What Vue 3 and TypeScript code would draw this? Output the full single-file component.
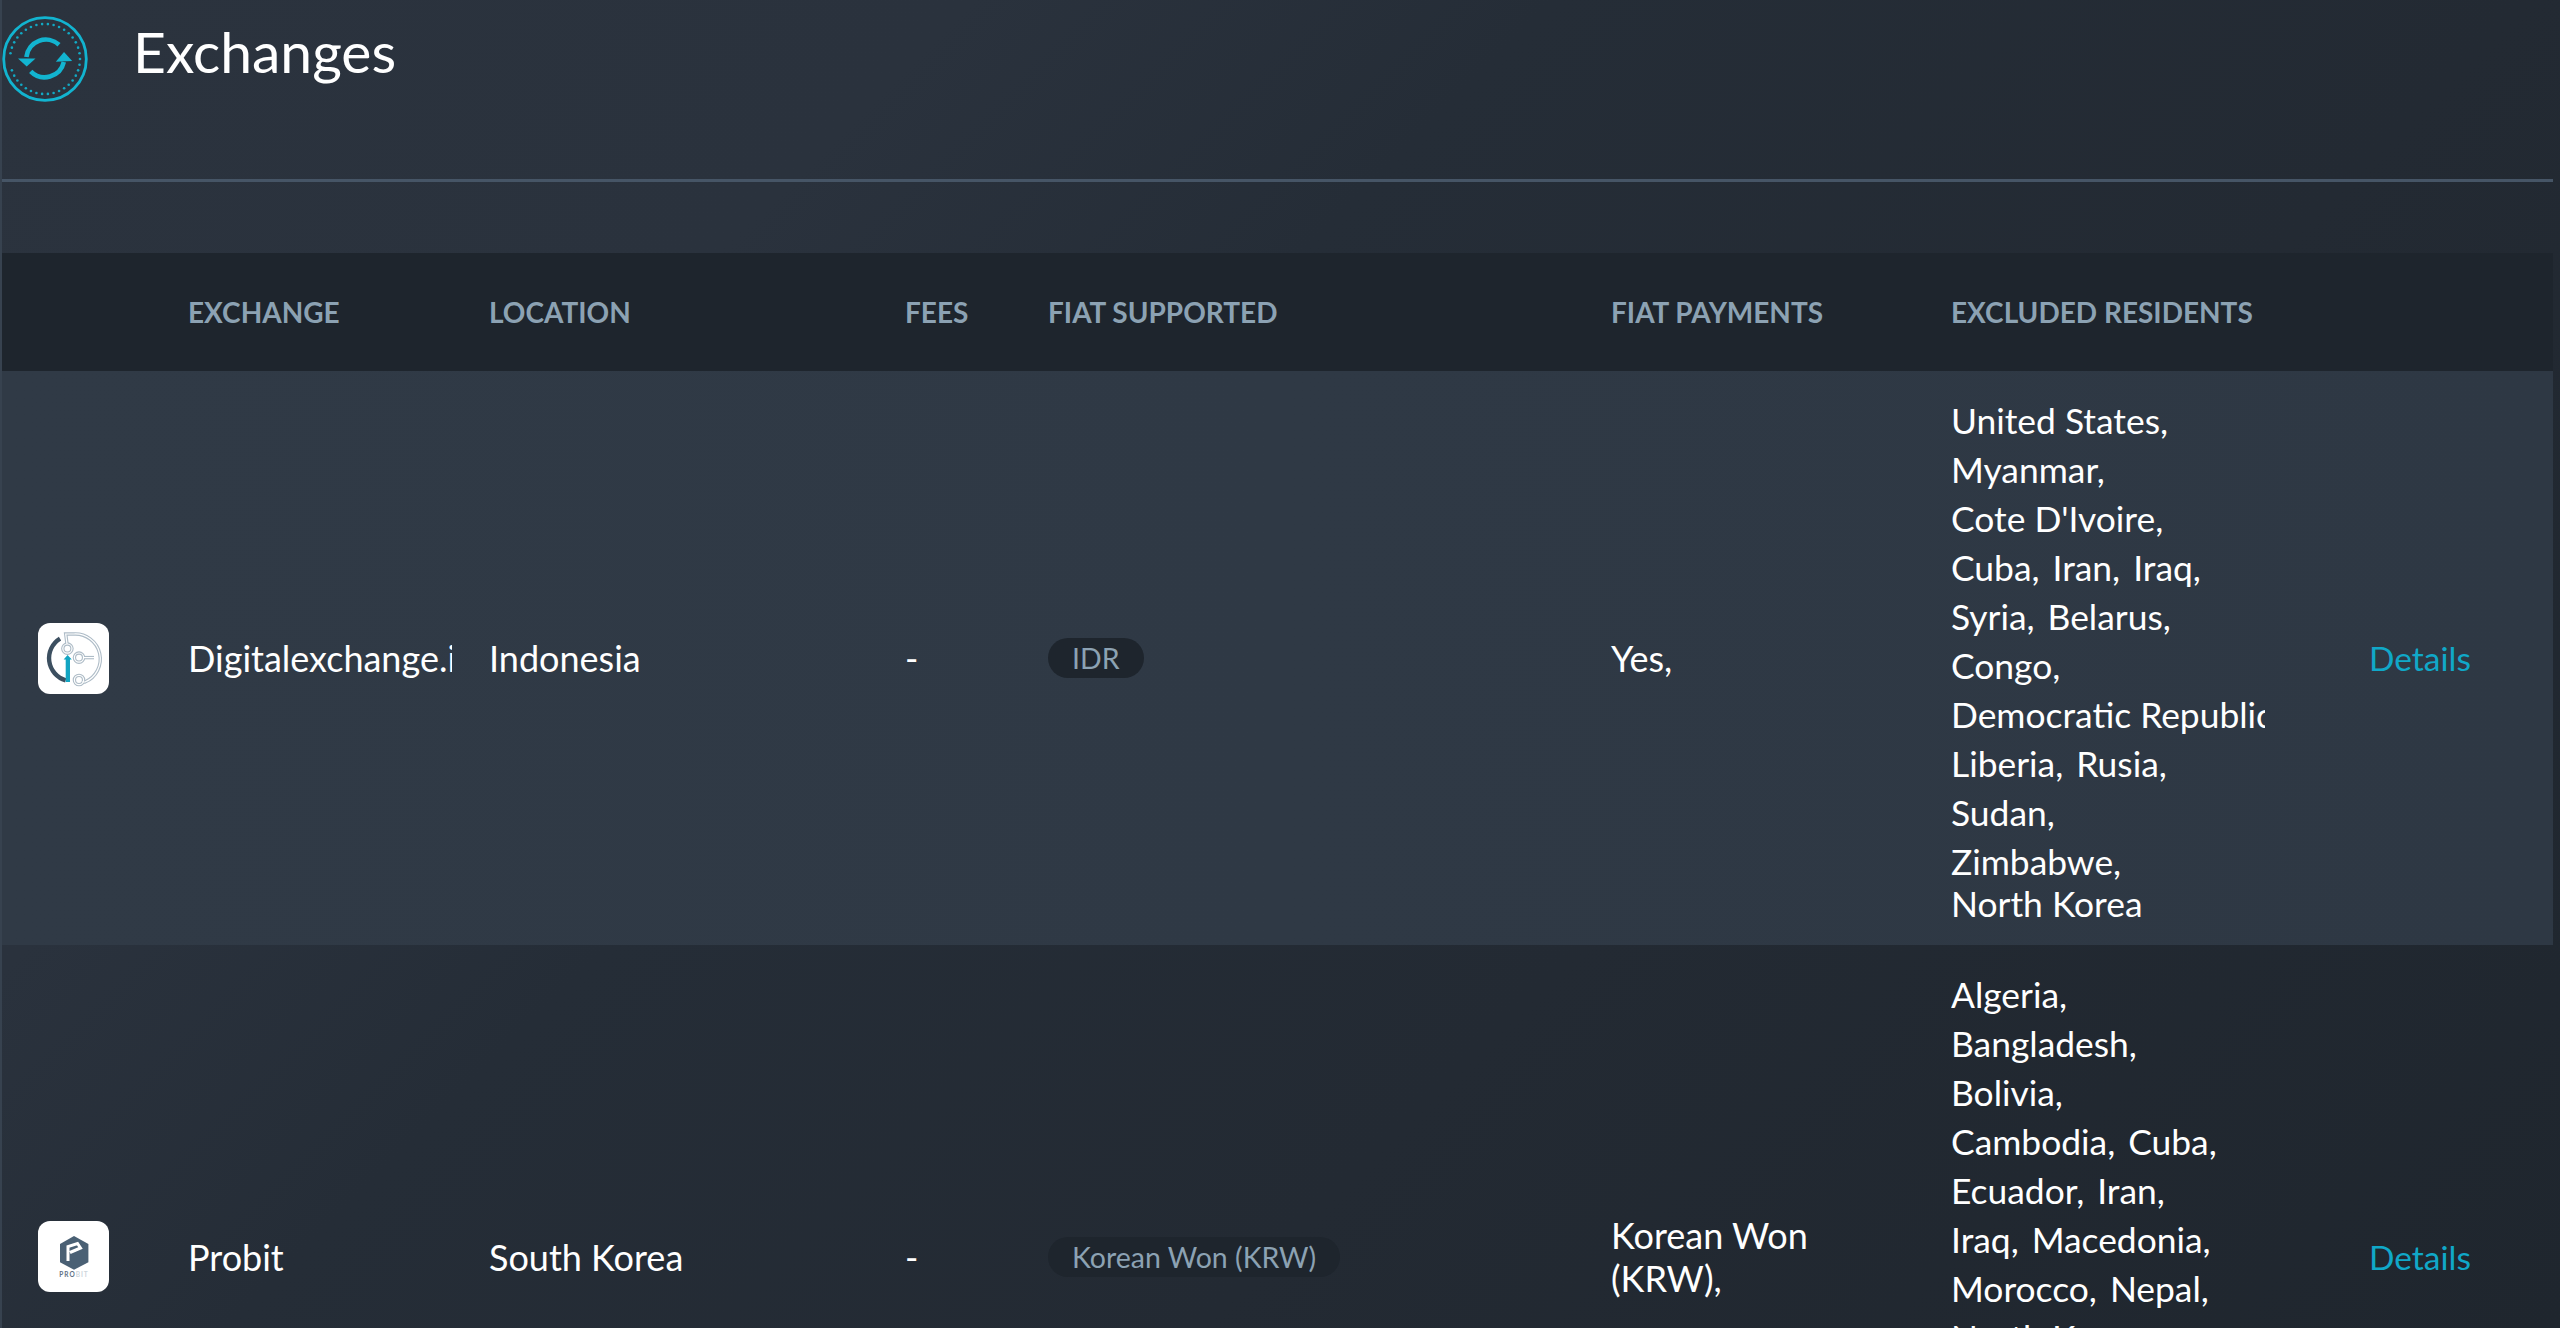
<script setup lang="ts">
interface Row {
  name: string
  location: string
  fiat: string
  payments: string[]
  excluded: string[][]
}
const rows: Row[] = [
  {
    name: 'Digitalexchange.io',
    location: 'Indonesia',
    fiat: 'IDR',
    payments: ['Yes,'],
    excluded: [
      ['United States,'], ['Myanmar,'], ["Cote D'Ivoire,"], ['Cuba,', 'Iran,', 'Iraq,'],
      ['Syria,', 'Belarus,'], ['Congo,'], ['Democratic Republic of Congo,'],
      ['Liberia,', 'Rusia,'], ['Sudan,'], ['Zimbabwe,'], ['North Korea']
    ]
  },
  {
    name: 'Probit',
    location: 'South Korea',
    fiat: 'Korean Won (KRW)',
    payments: ['Korean Won (KRW),'],
    excluded: [
      ['Algeria,'], ['Bangladesh,'], ['Bolivia,'], ['Cambodia,', 'Cuba,'], ['Ecuador,', 'Iran,'],
      ['Iraq,', 'Macedonia,'], ['Morocco,', 'Nepal,'], ['North Korea,'], ['Pakistan,'], ['Sudan,'], ['Syria,'], ['Yemen']
    ]
  }
]
const dots = Array.from({ length: 38 }, (_, i) => {
  const a = (i / 38) * Math.PI * 2
  return { x: 35 * Math.cos(a), y: 35 * Math.sin(a) }
}).filter((d) => !(d.x < -30 && d.y > 0 && d.y < 11))
</script>

<template>
  <div class="page">
    <main class="content">
      <header class="head">
        <svg class="logo" width="86" height="86" viewBox="-43 -43 86 86">
          <circle r="41.3" fill="none" stroke="#12b4d0" stroke-width="2.8" />
          <circle v-for="(d, i) in dots" :key="i" :cx="d.x" :cy="d.y" r="1.3" fill="#12a9c4" />
          <path d="M14 -14.3 A19.6 19.6 0 0 0 -18.6 -2" fill="none" stroke="#12b4d0" stroke-width="4.6" />
          <path d="M-14.3 12.3 A19.6 19.6 0 0 0 18.8 3" fill="none" stroke="#12b4d0" stroke-width="4.6" />
          <path d="M-27 -0.5 L-9.5 -0.5 L-18.3 7.5 Z" fill="#12b4d0" />
          <path d="M10.8 2.8 L27.2 2 L19 -7 Z" fill="#12b4d0" />
        </svg>
        <h1>Exchanges</h1>
      </header>
      <div class="rule"></div>
      <div class="row thead">
        <div></div>
        <div>EXCHANGE</div>
        <div>LOCATION</div>
        <div>FEES</div>
        <div>FIAT SUPPORTED</div>
        <div>FIAT PAYMENTS</div>
        <div>EXCLUDED RESIDENTS</div>
        <div></div>
      </div>
      <div v-for="(r, idx) in rows" :key="r.name" class="row body" :class="{ alt: idx === 0 }">
        <div class="iconcell">
          <div class="badge">
            <svg v-if="idx === 0" width="71" height="71" viewBox="0 0 71 71">
              <path d="M22 15.6 A23 23 0 0 0 27.7 57.3" fill="none" stroke="#3c4f60" stroke-width="4.4" />
              <g fill="none" stroke="#aebcc7" stroke-width="3.4">
                <path d="M29 21 L27.7 11 H36 A25 25 0 0 1 47 59 H44" />
                <path d="M45 34.6 H56" />
                <circle cx="29.4" cy="25.6" r="4.6" />
                <circle cx="41" cy="34.6" r="4.6" />
                <circle cx="41" cy="57" r="4.6" />
              </g>
              <g fill="none" stroke="#fff" stroke-width="1.2">
                <path d="M29 21 L27.7 11 H36 A25 25 0 0 1 47 59 H44" />
                <path d="M45 34.6 H56" />
                <circle cx="29.4" cy="25.6" r="4.6" />
                <circle cx="41" cy="34.6" r="4.6" />
                <circle cx="41" cy="57" r="4.6" />
              </g>
              <path d="M27.7 59 V36.5 H25.6 L29.6 32 L33.8 36.5 H32 V59 Z" fill="#13a5c2" />
            </svg>
            <svg v-else width="71" height="71" viewBox="0 0 71 71">
              <path d="M36 15 L50.4 23 V41.3 L36 48.8 L22 41.3 V23 Z" fill="#4a6074" />
              <path d="M30 40 V25.5 L39.5 22.5 L42.5 27 L32 31.5" fill="none" stroke="#fff" stroke-width="3" />
              <text x="36" y="56" class="mini" text-anchor="middle"><tspan fill="#5d7083">PRO</tspan><tspan fill="#cdd5dc">BIT</tspan></text>
            </svg>
          </div>
        </div>
        <div class="clip name">{{ r.name }}</div>
        <div>{{ r.location }}</div>
        <div>-</div>
        <div class="chipcell"><span class="chip">{{ r.fiat }}</span></div>
        <div class="pay"><span v-for="p in r.payments" :key="p">{{ p }}</span></div>
        <div class="excl">
          <div v-for="(line, li) in r.excluded" :key="li" class="line">
            <span v-for="c in line" :key="c">{{ c }}</span>
          </div>
        </div>
        <a class="link">Details</a>
      </div>
    </main>
  </div>
</template>

<style>
html, body { margin: 0; background: #20272f; overflow: hidden; }
</style>

<style scoped>
.page {
  height: 1328px;
  overflow: hidden;
  padding-left: 2px;
  box-sizing: border-box;
  background: linear-gradient(135deg, #2b333e 0%, #2a323d 25%, #252d37 40%, #232a33 65%, #1f262e 100%);
  box-shadow: inset 2px 0 0 #37424f;
  font-family: Lato, "Open Sans", sans-serif;
  color: #fff;
}
.content { width: 2551px; }
.head {
  height: 179px;
  display: flex;
  align-items: flex-start;
  box-sizing: border-box;
  padding-top: 16px;
}
.logo { flex: none; }
h1 {
  margin: -2px 0 0 45px;
  font-size: 57px;
  font-weight: 400;
  line-height: 74px;
}
.rule { height: 3px; background: #465566; margin-bottom: 71px; }
.row {
  display: grid;
  grid-template-columns: 186px 301px 416px 143px 563px 340px 418px 184px;
  align-items: center;
}
.thead {
  height: 118px;
  background: #1e252d;
  color: #8ca2b3;
  font-size: 28px;
  font-weight: 700;
}
.body { font-size: 36px; }
.alt { background: linear-gradient(90deg, #303a46, #2e3844); }
.iconcell { padding-left: 36px; }
.badge {
  width: 71px;
  height: 71px;
  border-radius: 12px;
  background: #fff;
}
.badge svg { display: block; }
.mini { font-size: 6.5px; font-weight: 700; letter-spacing: 1px; }
.clip { overflow: hidden; white-space: nowrap; margin-right: 37px; }
.chipcell { display: flex; }
.chip {
  background: #1e252d;
  color: #8ca2b3;
  font-size: 28.5px;
  line-height: 40px;
  padding: 0 24px;
  border-radius: 20px;
}
.pay { line-height: 43px; width: 240px; }
.excl { width: 314px; overflow: hidden; font-size: 35.4px; padding: 28px 0 20px; }
.line { line-height: 43px; margin-bottom: 6px; white-space: nowrap; display: flex; gap: 13px; }
.line:nth-last-child(2) { margin-bottom: 0; }
.line:last-child { margin-bottom: 0; line-height: 42px; }
.link { color: #10a8c8; font-size: 33.5px; }
</style>
